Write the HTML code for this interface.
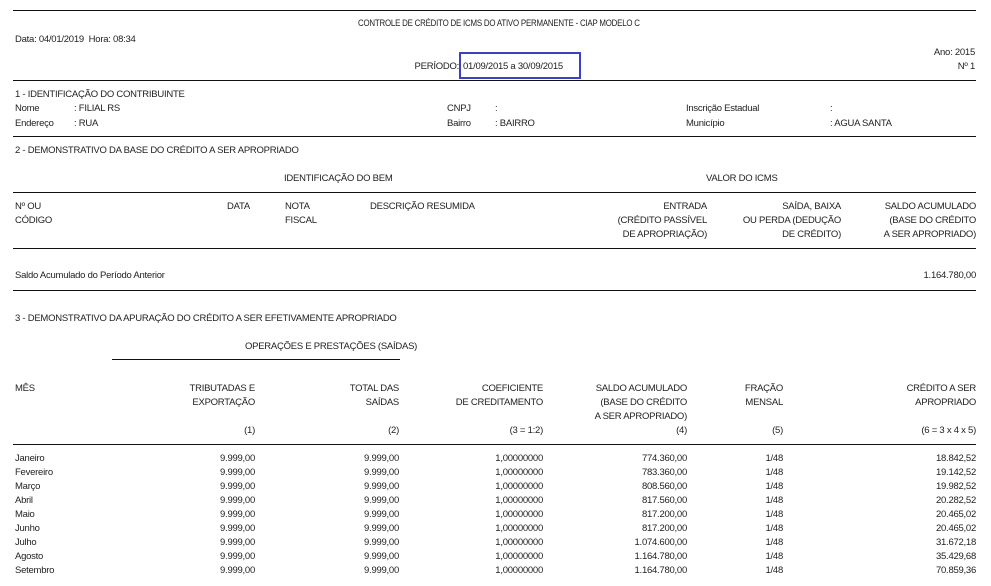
<!DOCTYPE html>
<html><head><meta charset="utf-8"><style>
body{margin:0;width:991px;height:586px;background:#fff;position:relative;overflow:hidden;font-family:"Liberation Sans","DejaVu Sans",sans-serif;font-size:9.5px;color:#222;letter-spacing:-0.25px}
.t{position:absolute;white-space:nowrap;line-height:14px;margin-top:1px}
.r{text-align:right}
.h{position:absolute;left:13px;width:963px;height:0;border-top:1.5px solid #111}
</style></head><body>
<div class="h" style="top:10px"></div>
<div class="t" style="left:358px;top:16px;transform:scaleX(0.83);transform-origin:0 0">CONTROLE DE CRÉDITO DE ICMS DO ATIVO PERMANENTE - CIAP MODELO C</div>
<div class="t" style="left:15px;top:32px">Data: 04/01/2019&nbsp; Hora: 08:34</div>
<div class="t" style="right:16px;top:45px">Ano: 2015</div>
<div class="t r" style="right:532px;top:59px">PERÍODO:</div>
<div class="t" style="left:463px;top:59px">01/09/2015 a 30/09/2015</div>
<div style="position:absolute;left:459px;top:52px;width:118px;height:23px;border:2px solid #3b40c4"></div>
<div class="t" style="right:16px;top:59px">Nº 1</div>
<div class="h" style="top:80px"></div>
<div class="t" style="left:15px;top:87px">1 - IDENTIFICAÇÃO DO CONTRIBUINTE</div>
<div class="t" style="left:15px;top:101px">Nome</div><div class="t" style="left:74px;top:101px">: FILIAL RS</div>
<div class="t" style="left:447px;top:101px">CNPJ</div><div class="t" style="left:495px;top:101px">:</div>
<div class="t" style="left:686px;top:101px">Inscrição Estadual</div><div class="t" style="left:830px;top:101px">:</div>
<div class="t" style="left:15px;top:116px">Endereço</div><div class="t" style="left:74px;top:116px">: RUA</div>
<div class="t" style="left:447px;top:116px">Bairro</div><div class="t" style="left:495px;top:116px">: BAIRRO</div>
<div class="t" style="left:686px;top:116px">Município</div><div class="t" style="left:830px;top:116px">: AGUA SANTA</div>
<div class="h" style="top:136px"></div>
<div class="t" style="left:15px;top:143px">2 - DEMONSTRATIVO DA BASE DO CRÉDITO A SER APROPRIADO</div>
<div class="t" style="left:284px;top:171px">IDENTIFICAÇÃO DO BEM</div>
<div class="t" style="left:706px;top:171px">VALOR DO ICMS</div>
<div class="h" style="top:192px"></div>
<div class="t" style="left:15px;top:199px">Nº OU<br>CÓDIGO</div>
<div class="t" style="left:227px;top:199px">DATA</div>
<div class="t" style="left:285px;top:199px">NOTA<br>FISCAL</div>
<div class="t" style="left:370px;top:199px">DESCRIÇÃO RESUMIDA</div>
<div class="t r" style="right:284px;top:199px">ENTRADA<br>(CRÉDITO PASSÍVEL<br>DE APROPRIAÇÃO)</div>
<div class="t r" style="right:150px;top:199px">SAÍDA, BAIXA<br>OU PERDA (DEDUÇÃO<br>DE CRÉDITO)</div>
<div class="t r" style="right:15px;top:199px">SALDO ACUMULADO<br>(BASE DO CRÉDITO<br>A SER APROPRIADO)</div>
<div class="h" style="top:248px"></div>
<div class="t" style="left:15px;top:268px">Saldo Acumulado do Período Anterior</div>
<div class="t" style="right:15px;top:268px">1.164.780,00</div>
<div class="h" style="top:290px"></div>
<div class="t" style="left:15px;top:311px">3 - DEMONSTRATIVO DA APURAÇÃO DO CRÉDITO A SER EFETIVAMENTE APROPRIADO</div>
<div class="t" style="left:245px;top:339px">OPERAÇÕES E PRESTAÇÕES (SAÍDAS)</div>
<div style="position:absolute;left:112px;top:359px;width:288px;border-top:1.5px solid #111"></div>
<div class="t" style="left:15px;top:381px">MÊS</div>
<div class="t r" style="right:736px;top:381px">TRIBUTADAS E<br>EXPORTAÇÃO<br><br>(1)</div>
<div class="t r" style="right:592px;top:381px">TOTAL DAS<br>SAÍDAS<br><br>(2)</div>
<div class="t r" style="right:448px;top:381px">COEFICIENTE<br>DE CREDITAMENTO<br><br>(3 = 1:2)</div>
<div class="t r" style="right:304px;top:381px">SALDO ACUMULADO<br>(BASE DO CRÉDITO<br>A SER APROPRIADO)<br>(4)</div>
<div class="t r" style="right:208px;top:381px">FRAÇÃO<br>MENSAL<br><br>(5)</div>
<div class="t r" style="right:15px;top:381px">CRÉDITO A SER<br>APROPRIADO<br><br>(6 = 3 x 4 x 5)</div>
<div class="h" style="top:444px"></div>
<div class="t" style="left:15px;top:451px">Janeiro<br>Fevereiro<br>Março<br>Abril<br>Maio<br>Junho<br>Julho<br>Agosto<br>Setembro</div>
<div class="t r" style="right:736px;top:451px">9.999,00<br>9.999,00<br>9.999,00<br>9.999,00<br>9.999,00<br>9.999,00<br>9.999,00<br>9.999,00<br>9.999,00</div>
<div class="t r" style="right:592px;top:451px">9.999,00<br>9.999,00<br>9.999,00<br>9.999,00<br>9.999,00<br>9.999,00<br>9.999,00<br>9.999,00<br>9.999,00</div>
<div class="t r" style="right:448px;top:451px">1,00000000<br>1,00000000<br>1,00000000<br>1,00000000<br>1,00000000<br>1,00000000<br>1,00000000<br>1,00000000<br>1,00000000</div>
<div class="t r" style="right:304px;top:451px">774.360,00<br>783.360,00<br>808.560,00<br>817.560,00<br>817.200,00<br>817.200,00<br>1.074.600,00<br>1.164.780,00<br>1.164.780,00</div>
<div class="t r" style="right:208px;top:451px">1/48<br>1/48<br>1/48<br>1/48<br>1/48<br>1/48<br>1/48<br>1/48<br>1/48</div>
<div class="t r" style="right:15px;top:451px">18.842,52<br>19.142,52<br>19.982,52<br>20.282,52<br>20.465,02<br>20.465,02<br>31.672,18<br>35.429,68<br>70.859,36</div>
</body></html>
